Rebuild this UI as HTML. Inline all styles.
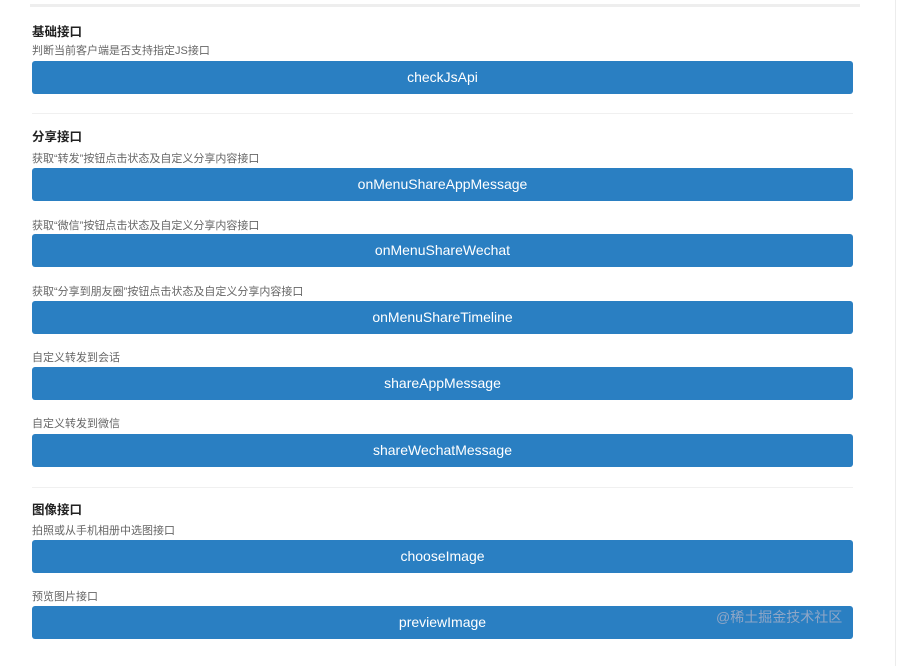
<!DOCTYPE html>
<html><head><meta charset="utf-8"><style>
body{margin:0;width:898px;height:666px;background:#fff;position:relative;overflow:hidden;font-family:"Liberation Sans","Noto Sans CJK SC",sans-serif}
.top{position:absolute;left:30px;top:4px;width:830px;height:3px;background:#eeeeee}
.rl{position:absolute;left:895px;top:0;width:1px;height:666px;background:#ececec}
.t{position:absolute;left:32px;font-size:12.5px;font-weight:bold;color:#222}
.d{position:absolute;left:32px;font-size:11px;color:#666}
.b{position:absolute;left:32px;width:821px;height:33px;background:#2a7fc2;border-radius:3px;color:#fff;font-size:14px;line-height:33px;text-align:center}
.s{position:absolute;left:32px;width:821px;height:1px;background:#f0f0f0}
.w{position:absolute;left:716px;top:607px;font-size:14px;color:#8fa6c6}
</style></head><body>
<div class="top"></div><div class="rl"></div>
<div class="t" style="top:21px">基础接口</div>
<div class="d" style="top:42px">判断当前客户端是否支持指定JS接口</div>
<div class="b" style="top:61px">checkJsApi</div>
<div class="s" style="top:113px"></div>
<div class="t" style="top:126px">分享接口</div>
<div class="d" style="top:150px">获取“转发”按钮点击状态及自定义分享内容接口</div>
<div class="b" style="top:168px">onMenuShareAppMessage</div>
<div class="d" style="top:217px">获取“微信”按钮点击状态及自定义分享内容接口</div>
<div class="b" style="top:234px">onMenuShareWechat</div>
<div class="d" style="top:283px">获取“分享到朋友圈”按钮点击状态及自定义分享内容接口</div>
<div class="b" style="top:301px">onMenuShareTimeline</div>
<div class="d" style="top:349px">自定义转发到会话</div>
<div class="b" style="top:367px">shareAppMessage</div>
<div class="d" style="top:415px">自定义转发到微信</div>
<div class="b" style="top:434px">shareWechatMessage</div>
<div class="s" style="top:487px"></div>
<div class="t" style="top:499px">图像接口</div>
<div class="d" style="top:522px">拍照或从手机相册中选图接口</div>
<div class="b" style="top:540px">chooseImage</div>
<div class="d" style="top:588px">预览图片接口</div>
<div class="b" style="top:606px">previewImage</div>
<div class="w">@稀土掘金技术社区</div>
</body></html>
